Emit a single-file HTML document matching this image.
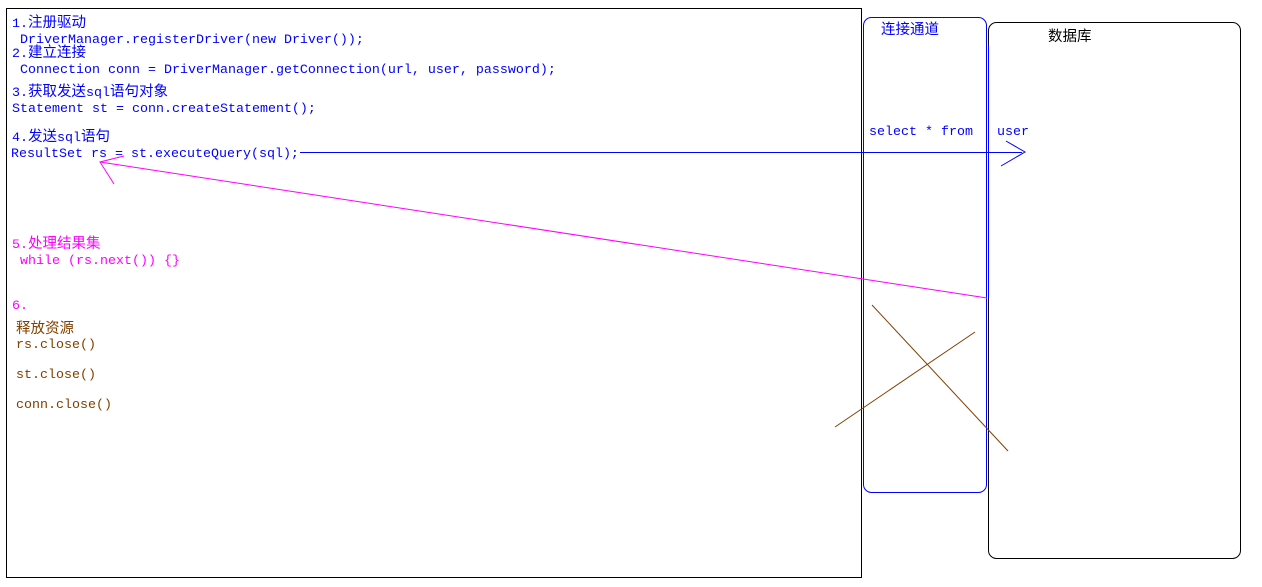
<!DOCTYPE html>
<html><head><meta charset="utf-8"><style>
html,body{margin:0;padding:0;background:#fff;width:1262px;height:587px;overflow:hidden}
text{font-family:"Liberation Mono","Noto Sans CJK SC",monospace;font-size:13.33px}
.c{font-size:14.5px}
</style></head><body>
<svg width="1262" height="587" xmlns="http://www.w3.org/2000/svg">
<rect x="6.5" y="8.5" width="855" height="569" fill="none" stroke="#000"/>
<rect x="863.5" y="17.5" width="123" height="475" rx="8" fill="none" stroke="#00f"/>
<rect x="988.5" y="22.5" width="252" height="536" rx="8" fill="none" stroke="#000"/>
<line x1="986.5" y1="45" x2="986.5" y2="298" stroke="#00f"/>
<line x1="988.5" y1="45" x2="988.5" y2="298" stroke="#00f"/>
<g fill="#00f">
<text x="12" y="27">1.<tspan class="c">注册驱动</tspan></text>
<text x="20" y="43">DriverManager.registerDriver(new Driver());</text>
<text x="12" y="57">2.<tspan class="c">建立连接</tspan></text>
<text x="20" y="73">Connection conn = DriverManager.getConnection(url, user, password);</text>
<text x="12" y="96">3.<tspan class="c">获取发送</tspan>sql<tspan class="c">语句对象</tspan></text>
<text x="12" y="112">Statement st = conn.createStatement();</text>
<text x="12" y="141">4.<tspan class="c">发送</tspan>sql<tspan class="c">语句</tspan></text>
<text x="11" y="157">ResultSet rs = st.executeQuery(sql);</text>
<text x="869" y="135">select * from</text>
<text x="997" y="135">user</text>
<text x="881" y="34" class="c">连接通道</text>
</g>
<text x="1048" y="41" fill="#000" class="c">数据库</text>
<g fill="#f0f">
<text x="12" y="248">5.<tspan class="c">处理结果集</tspan></text>
<text x="20" y="264">while (rs.next()) {}</text>
<text x="12" y="309">6.</text>
</g>
<g fill="#804000">
<text x="16" y="333" class="c">释放资源</text>
<text x="16" y="348">rs.close()</text>
<text x="16" y="378">st.close()</text>
<text x="16" y="408">conn.close()</text>
</g>
<line x1="300" y1="152.5" x2="1022" y2="152.5" stroke="#00f"/>
<polyline points="1006,141 1025,152 1001,166" fill="none" stroke="#00f"/>
<line x1="987" y1="298" x2="100" y2="162" stroke="#f0f"/>
<polyline points="124,156 100,162 114,184" fill="none" stroke="#f0f"/>
<line x1="872" y1="305" x2="1008" y2="451" stroke="#804000"/>
<line x1="835" y1="427" x2="975" y2="332" stroke="#804000"/>
</svg>
</body></html>
